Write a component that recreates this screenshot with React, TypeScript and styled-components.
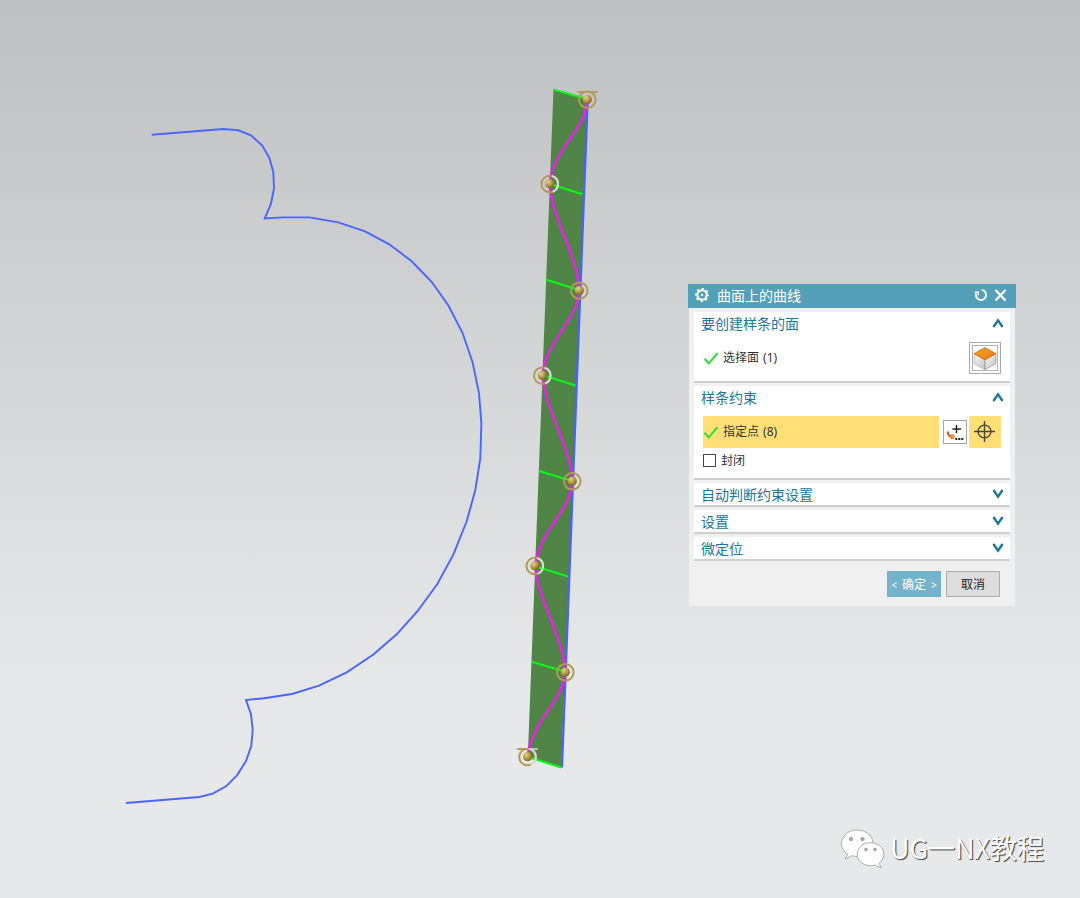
import React from "react";
import styled, { createGlobalStyle } from "styled-components";

const GlobalStyle = createGlobalStyle`
  * { box-sizing: border-box; }
  body { margin: 0; font-family: "Noto Sans", "Noto Sans CJK SC", sans-serif; }
`;

const Viewport = styled.main`
  position: relative;
  width: 1080px;
  height: 898px;
  overflow: hidden;
  background: linear-gradient(#bebfc1 0, #c5c6c8 110px, #d9dadc 450px, #e4e6e7 650px, #e7e8ea 740px, #e7e8ea 100%);
`;

const Scene = styled.svg`
  display: block;
  width: 1080px;
  height: 898px;
`;

const Dialog = styled.section`
  position: absolute;
  left: 688px;
  top: 283.5px;
  width: 328px;
  height: 322.5px;
  display: flex;
  flex-direction: column;
`;

const TitleBar = styled.header`
  height: 24px;
  flex: none;
  display: flex;
  align-items: center;
  padding: 0 8px 0 7px;
  background: #55a0b9;
  color: #fff;
`;

const Title = styled.h1`
  flex: 1;
  margin: 1px 0 0 8px;
  font-size: 14px;
  line-height: 20px;
  font-weight: 400;
`;

const TitleIcon = styled.svg<{ $gap?: number }>`
  width: 14px;
  height: 14px;
  flex: none;
  margin: 0 0 1px ${(p) => p.$gap ?? 0}px;
`;

const Body = styled.div`
  flex: 1;
  margin: 0 1px;
  padding: 4px 5px 0;
  display: flex;
  flex-direction: column;
  gap: 3px;
  background: #f0f0f0;
`;

const Group = styled.section<{ $height: number }>`
  height: ${(p) => p.$height}px;
  flex: none;
  background: #fff;
  border-bottom: 2px solid #cfcfcf;
  padding: 0 5px 0 7px;
`;

const GroupHeader = styled.div<{ $open?: boolean }>`
  display: flex;
  justify-content: space-between;
  align-items: center;
  height: ${(p) => (p.$open ? 25 : 24)}px;
  color: #1c7696;
  font-size: 14px;
  line-height: 20px;
`;

const Chevron = styled.svg`
  width: 12px;
  height: 10px;
  margin: 0 1px 2px 0;
`;

const Row = styled.div<{ $top: number }>`
  display: flex;
  align-items: center;
  height: 32px;
  margin: ${(p) => p.$top}px 4px 0 2px;
  color: #333;
  font-size: 12px;
`;

const Field = styled.div<{ $active?: boolean }>`
  flex: 1;
  height: 32px;
  display: flex;
  align-items: center;
  gap: 4px;
  padding-bottom: 2px;
  word-spacing: 1px;
  background: ${(p) => (p.$active ? "#ffdf76" : "transparent")};
`;

const CheckMark = styled.svg`
  width: 16px;
  height: 15px;
  margin-top: 3px;
`;

const FaceButton = styled.button`
  width: 32px;
  height: 32px;
  padding: 2px;
  border: 1px solid #aaa;
  background: #fff;
  svg { display: block; width: 26px; height: 26px; }
`;

const PointDialogButton = styled.button`
  width: 24px;
  height: 24px;
  padding: 0;
  margin: 0 2px 0 4px;
  border: 1px solid #a4a4a4;
  background: #fff;
  svg { display: block; width: 22px; height: 22px; }
`;

const PointTypeButton = styled.button`
  width: 32px;
  height: 32px;
  padding: 0;
  border: 0;
  background: #ffdf76;
  svg { display: block; width: 32px; height: 32px; }
`;

const CheckRow = styled.label`
  display: flex;
  align-items: center;
  gap: 5px;
  height: 25px;
  margin-left: 2px;
  font-size: 12px;
  color: #333;
`;

const Box = styled.span`
  width: 13px;
  height: 13px;
  margin-bottom: -1px;
  border: 1px solid #444;
  background: #fff;
`;

const Footer = styled.footer`
  display: flex;
  justify-content: flex-end;
  gap: 5px;
  padding: 7px 10px 0 0;
`;

const ActionButton = styled.button<{ $primary?: boolean }>`
  width: 54px;
  height: 26px;
  padding: 0;
  font: 12px "Noto Sans", "Noto Sans CJK SC", sans-serif;
  word-spacing: 2px;
  white-space: nowrap;
  color: ${(p) => (p.$primary ? "#fff" : "#222")};
  background: ${(p) => (p.$primary ? "#74b3ca" : "#dddddd")};
  border: ${(p) => (p.$primary ? "0" : "1px solid #adadad")};
`;

const Angle = styled.span`
  font-size: 10px;
`;

const Watermark = styled.div`
  position: absolute;
  left: 840px;
  top: 826px;
  display: flex;
  align-items: center;
  gap: 4px;
  color: #fff;
  font: 400 27px/44px "Noto Sans CJK SC", sans-serif;
  white-space: nowrap;
  text-shadow: 1px 1px 1px #555, 1px 1px 0 #777;
  svg { width: 46px; height: 42px; }
`;

const PROFILE =
  "151.7,134.7 223.3,129 238.3,130.3 251,135.3 262,145.3 269.3,157.7 273.3,172 274,188.3 271,203.7 264.7,218.5 282.7,217.4 309.3,217.4 338.3,222.3 365,231.3 389.3,244.3 411.7,261.3 432,282.3 448.7,306 462.7,333.3 472.7,362.7 479,393.3 481.4,423.3 480.3,458.3 475.3,490 466.7,521.3 453.3,554.7 437.3,584 417.7,611 396.7,634.3 373.7,654.3 346.7,672.3 319,685.7 292,694 264,698.3 246,700 251,714.3 252.7,730 251.3,745.7 246,761 237,775.3 226,786.3 212.7,793.7 199.3,797 126,803";

const POINTS: [number, number][] = [
  [587.3, 99.7],
  [549.7, 184],
  [579.3, 290.7],
  [542.3, 375.7],
  [572.3, 481.3],
  [534.8, 566],
  [565.3, 672.3],
  [527.5, 757],
];

const RULES = [
  [553.3, 89.5, 587, 99],
  [550, 184, 582.5, 194.3],
  [546.3, 279.8, 579, 290],
  [542.3, 375, 575.5, 385.4],
  [539, 471, 572, 481],
  [535, 566.3, 568, 576.6],
  [531.7, 661.8, 564.6, 671.5],
  [528, 757, 561.3, 767.5],
];

const WAVE =
  "M587.3 100 C586 130 552 150 549.8 184 C551 217 578 256 579.3 290 C578 321 545 341 542.6 375 C544 408 571 447 572.2 481 C571 512 538 532 535.2 566 C537 599 564 638 565.2 672 C563 703 530 723 527.7 757";

function SceneDrawing() {
  return (
    <Scene viewBox="0 0 1080 898" fill="none">
      <defs>
        <radialGradient id="ball" cx="35%" cy="30%" r="75%">
          <stop offset="0" stopColor="#e6cf88" />
          <stop offset="0.5" stopColor="#bb9d4c" />
          <stop offset="1" stopColor="#75601f" />
        </radialGradient>
      </defs>
      <polyline points={PROFILE} stroke="#4a66ff" strokeWidth="1.9" />
      <polygon points="553.5,89 587.8,99 561.3,767.5 527.8,757" fill="#508547" />
      <path d="M587.7 100 562 767.5" stroke="#4664f5" strokeWidth="2.2" />
      {RULES.map(([x1, y1, x2, y2]) => (
        <line key={y1} x1={x1} y1={y1} x2={x2} y2={y2} stroke="#0bf818" strokeWidth="2.1" />
      ))}
      <path d={WAVE} stroke="#f01cf0" strokeWidth="2.4" />
      {POINTS.map(([x, y], i) => {
        const onLeft = i % 2 === 1;
        return (
          <g key={y}>
            <circle cx={x} cy={y} r="8.3" stroke="#b29a56" strokeWidth="2" />
            {onLeft && (
              <path
                d={`M${x + 2.3} ${y - 8} A8.3 8.3 0 0 1 ${x + 3} ${y + 7.7}`}
                stroke="#d9dcd5"
                strokeWidth="2.1"
              />
            )}
            <circle cx={x} cy={y - 0.3} r="4.6" fill="url(#ball)" />
          </g>
        );
      })}
      <path d="M577.3 91.8h20.4M517.3 749h11" stroke="#b29a56" strokeWidth="1.8" />
      <path d="M528.3 749h9.4" stroke="#c9c9c3" strokeWidth="1.8" />
    </Scene>
  );
}

function GearIcon() {
  return (
    <TitleIcon viewBox="0 0 14 14" fill="none" stroke="#fff">
      <circle cx="7" cy="7" r="4.7" strokeWidth="2.1" />
      <circle cx="7" cy="7" r="6.2" strokeWidth="1.6" strokeDasharray="2.4 2.47" strokeDashoffset="1.2" />
      <circle cx="7" cy="7" r="1.2" fill="#fff" stroke="none" />
    </TitleIcon>
  );
}

function Arrow({ up }: { up?: boolean }) {
  return (
    <Chevron viewBox="0 0 12 10" fill="none" stroke="#1c7696" strokeWidth="2.4">
      <path d={up ? "M1.4 9 6 2.4 10.6 9" : "M1.4 1 6 7.6 10.6 1"} />
    </Chevron>
  );
}

function Check() {
  return (
    <CheckMark viewBox="0 0 16 15" fill="none" stroke="#35e03c" strokeWidth="2.1">
      <path d="M1.5 7.8 5.8 12.4 14.6 2" />
    </CheckMark>
  );
}

export default function App() {
  return (
    <Viewport>
      <GlobalStyle />
      <SceneDrawing />
      <Dialog>
        <TitleBar>
          <GearIcon />
          <Title>曲面上的曲线</Title>
          <TitleIcon viewBox="0 0 14 14" fill="none" stroke="#fff" strokeWidth="1.9">
            <path d="M7.6 1.9A5.1 5.1 0 1 1 2.1 5.500" />
            <path d="M.8 4.300h3.500v3" strokeWidth="1.4" />
          </TitleIcon>
          <TitleIcon $gap={6} viewBox="0 0 14 14" fill="none" stroke="#fff" strokeWidth="2.2">
            <path d="M1.500 2l10 10.500M11.500 2 1.500 12.500" />
          </TitleIcon>
        </TitleBar>
        <Body>
          <Group $height={71}>
            <GroupHeader $open>
              要创建样条的面
              <Arrow up />
            </GroupHeader>
            <Row $top={5}>
              <Field>
                <Check />
                选择面 (1)
              </Field>
              <FaceButton>
                <svg viewBox="0 0 26 26">
                  <defs>
                    <linearGradient id="top" x1="0" y1="0" x2="1" y2="1">
                      <stop offset="0" stopColor="#f9a52a" />
                      <stop offset="1" stopColor="#e97a0b" />
                    </linearGradient>
                    <linearGradient id="side" x1="0" y1="0" x2="1" y2="1">
                      <stop offset="0" stopColor="#f6f6f6" />
                      <stop offset="1" stopColor="#c4c4c4" />
                    </linearGradient>
                  </defs>
                  <rect x=".5" y=".5" width="25" height="25" fill="none" stroke="#666" strokeDasharray="1 1" />
                  <path d="M2.2 8.7 13 14.8v9.7L2.2 18.6Z" fill="url(#side)" stroke="#a2a2a2" strokeWidth=".7" />
                  <path d="M13 14.8 23.8 8.7v9.9L13 24.5Z" fill="url(#side)" stroke="#8d8d8d" strokeWidth=".7" />
                  <path d="M13 2.6 23.8 8.6 13 14.8 2.2 8.6Z" fill="url(#top)" stroke="#d2600c" strokeWidth=".8" />
                </svg>
              </FaceButton>
            </Row>
          </Group>
          <Group $height={94}>
            <GroupHeader $open>
              样条约束
              <Arrow up />
            </GroupHeader>
            <Row $top={5}>
              <Field $active>
                <Check />
                指定点 (8)
              </Field>
              <PointDialogButton>
                <svg viewBox="0 0 22 22" fill="none">
                  <path d="M12.500 4v8M8.500 8h8.500" stroke="#222" strokeWidth="1.4" />
                  <path d="M3.6 10.5Q4 15.5 8 16" stroke="#d75a2b" strokeWidth="2.2" />
                  <circle cx="8.3" cy="15.8" r="2" fill="#f7a21b" stroke="#e0702b" />
                  <path d="M11.3 18h8" stroke="#222" strokeWidth="2" strokeDasharray="2 1" />
                </svg>
              </PointDialogButton>
              <PointTypeButton>
                <svg viewBox="0 0 32 32" fill="none" stroke="#4b4536" strokeWidth="1.4">
                  <circle cx="15.5" cy="15.5" r="6.4" />
                  <path d="M15.5 5v21M5 15.5h21" />
                </svg>
              </PointTypeButton>
            </Row>
            <CheckRow>
              <Box />
              封闭
            </CheckRow>
          </Group>
          {["自动判断约束设置", "设置", "微定位"].map((name) => (
            <Group key={name} $height={24}>
              <GroupHeader>
                {name}
                <Arrow />
              </GroupHeader>
            </Group>
          ))}
          <Footer>
            <ActionButton $primary>
              <Angle>&lt;</Angle> 确定 <Angle>&gt;</Angle>
            </ActionButton>
            <ActionButton>取消</ActionButton>
          </Footer>
        </Body>
      </Dialog>
      <Watermark>
        <svg viewBox="0 0 46 42" stroke="#999" strokeWidth=".8">
          <path
            d="M17 3C8.300 3 1.500 9 1.500 16.500c0 4.500 2.300 8 6 10.500L5.500 32l6.500-3.300c10 3 21-2 21-12.200C33 9 26 3 17 3Z"
            fill="#fff"
          />
          <path
            d="M30.500 15.700c-7.500 0-13.300 5-13.300 11.500S23 38.700 30.500 38.700c1.600 0 3.200-.3 4.500-.7l6 3-1.800-4.800c3-2.200 4.600-5.400 4.600-9 0-6.500-5.800-11.500-13.300-11.500Z"
            fill="#fff"
          />
          <g fill="#a8aaab">
            <circle cx="11" cy="12" r="1.700" />
            <circle cx="22.500" cy="12" r="1.700" />
            <circle cx="26" cy="22.500" r="1.400" />
            <circle cx="35" cy="22.500" r="1.400" />
          </g>
        </svg>
        UG一NX教程
      </Watermark>
    </Viewport>
  );
}
